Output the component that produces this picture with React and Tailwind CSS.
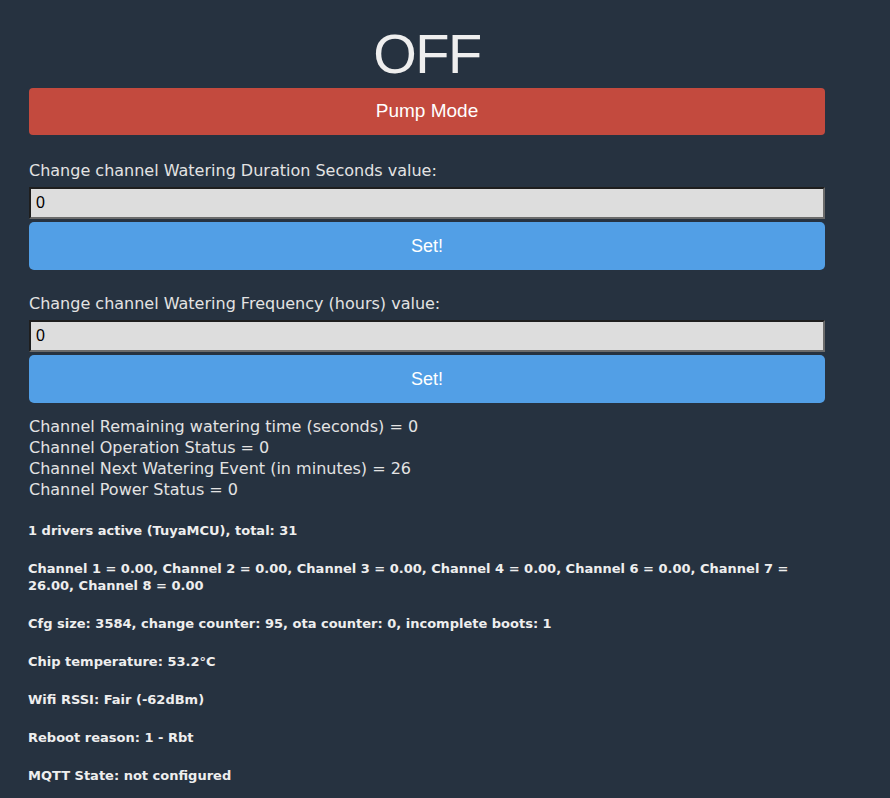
export default function App() {
    const stats = [
        'Channel Remaining watering time (seconds) = 0',
        'Channel Operation Status = 0',
        'Channel Next Watering Event (in minutes) = 26',
        'Channel Power Status = 0',
    ];

    const info = [
        '1 drivers active (TuyaMCU), total: 31',
        null,
        'Cfg size: 3584, change counter: 95, ota counter: 0, incomplete boots: 1',
        'Chip temperature: 53.2°C',
        'Wifi RSSI: Fair (-62dBm)',
        'Reboot reason: 1 - Rbt',
        'MQTT State: not configured',
    ];

    const fields = [
        'Change channel Watering Duration Seconds value:',
        'Change channel Watering Frequency (hours) value:',
    ];

    return (
        <div className="min-h-[798px] bg-[#263240] pl-[29px] pt-[26px] text-[#e3e3e3]">
            <div className="w-[796px] flex flex-col">
                <h1 className="text-center text-[56px] leading-[56px] tracking-[-1.5px] text-[#eeeeee] font-['Liberation_Sans',Arial,sans-serif]">
                    OFF
                </h1>
                <button className="mt-[6px] h-[47px] w-full rounded-[4px] bg-[#c34a3e] text-[19px] text-white font-['Liberation_Sans',Arial,sans-serif]">
                    Pump Mode
                </button>

                <div className="mt-[25px] flex flex-col gap-[23px]">
                    {fields.map((label) => (
                        <div key={label} className="flex flex-col">
                            <label className="text-[16px] leading-[21px] font-['DejaVu_Sans',Verdana,sans-serif]">
                                {label}
                            </label>
                            <input
                                type="text"
                                defaultValue="0"
                                className="mt-[6px] h-[32px] w-full bg-[#dddddd] px-[5px] text-[16px] text-black border-2 border-t-[#1e1e1e] border-l-[#1e1e1e] border-b-[#6b6b6b] border-r-[#6b6b6b] font-['Liberation_Sans',Arial,sans-serif] focus:outline-none"
                            />
                            <button className="mt-[3px] h-[48px] w-full rounded-[5px] bg-[#529fe6] text-[18px] text-white font-['Liberation_Sans',Arial,sans-serif]">
                                Set!
                            </button>
                        </div>
                    ))}
                </div>

                <div className="mt-[13px] flex flex-col text-[16px] leading-[21px] font-['DejaVu_Sans',Verdana,sans-serif]">
                    {stats.map((line) => (
                        <div key={line}>{line}</div>
                    ))}
                </div>

                <div className="mt-[22px] -ml-[1px] flex flex-col gap-[21px] text-[13px] leading-[17px] font-bold text-[#eeeeee] font-['DejaVu_Sans',Verdana,sans-serif]">
                    {info.map((line, i) =>
                        line ? (
                            <h5 key={i}>{line}</h5>
                        ) : (
                            <h5 key={i}>
                                Channel 1 = 0.00, Channel 2 = 0.00, Channel 3 = 0.00, Channel 4 = 0.00, Channel 6 = 0.00, Channel 7 =
                                <br />
                                26.00, Channel 8 = 0.00
                            </h5>
                        )
                    )}
                </div>
            </div>
        </div>
    );
}
